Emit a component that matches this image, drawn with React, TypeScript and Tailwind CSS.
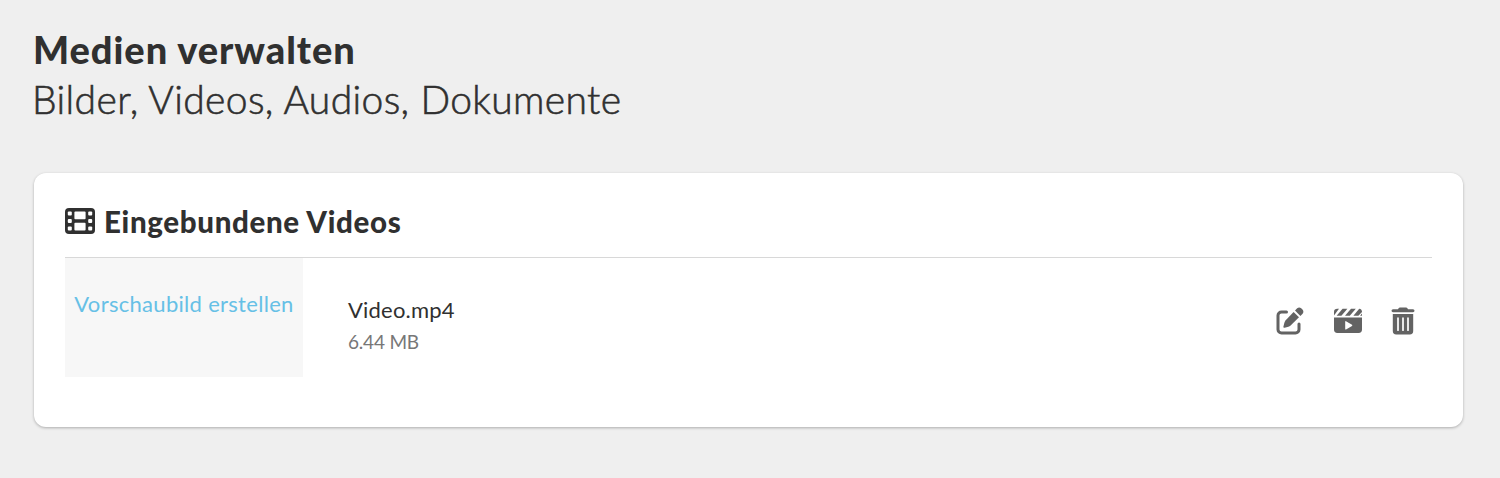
import type { ReactNode } from "react";

interface IconButtonProps {
  label: string;
  children: ReactNode;
}

function FilmIcon() {
  return (
    <svg width="31" height="28" viewBox="1 0 31 28" fill="none" aria-hidden="true">
      <rect x="1" y="1" width="30" height="26" rx="4" fill="#303030" />
      <g fill="#fff">
        <rect x="3.8" y="4.4" width="4" height="4" rx="1" />
        <rect x="3.8" y="12" width="4" height="4" rx="1" />
        <rect x="3.8" y="19.6" width="4" height="4" rx="1" />
        <rect x="10.4" y="4.4" width="11.2" height="7.8" rx="1" />
        <rect x="10.4" y="15.8" width="11.2" height="7.8" rx="1" />
        <rect x="24.2" y="4.4" width="4" height="4" rx="1" />
        <rect x="24.2" y="12" width="4" height="4" rx="1" />
        <rect x="24.2" y="19.6" width="4" height="4" rx="1" />
      </g>
    </svg>
  );
}

function EditIcon() {
  return (
    <svg width="28" height="28" viewBox="0 0 28 28" fill="none" aria-hidden="true">
      <path
        d="M10.5 5H5.5A3.500 3.500 0 0 0 2 8.500V22.500A3.500 3.500 0 0 0 5.500 26H19.500A3.500 3.500 0 0 0 23 22.500V17"
        stroke="#636363"
        strokeWidth="3"
        strokeLinecap="round"
      />
      <path
        d="M17.600 4.900L23 10.300L14.600 18.400Q13.600 19.300 12.400 19.700L8.600 20.700Q7.100 21 7.400 19.500L8.400 15.700Q8.800 14.300 9.700 13.200Z"
        fill="#636363"
      />
      <path
        d="M19 3.500L21.200 1.300Q23.200-.2 25.200 1.300L26.700 2.800Q28.100 4.700 26.600 6.700L24.400 8.900Z"
        fill="#636363"
      />
    </svg>
  );
}

function ClapperIcon() {
  return (
    <svg width="28" height="28" viewBox="0 0 28 28" aria-hidden="true">
      <g fill="#636363">
        <path d="M0 8.500V5Q0 1.800 3.400 1.800H5Z" />
        <path d="M8.600 1.800H13.400L7.400 8.800H2.600Z" />
        <path d="M17 1.800H21.800L15.800 8.800H11Z" />
        <path d="M25.200 1.800Q28 2.200 28 5L24.400 8.800H19.400Z" />
        <path d="M28 6.500V8.800H26.100Z" />
        <path
          d="M0 10.600H28V22.600Q28 26 24.600 26H3.400Q0 26 0 22.600ZM11.200 14.600V22Q11.300 22.800 12 22.400L18 18.900Q18.700 18.300 18 17.700L12 14.200Q11.300 13.900 11.200 14.600Z"
          fillRule="evenodd"
        />
      </g>
    </svg>
  );
}

function TrashIcon() {
  return (
    <svg width="24" height="28" viewBox="0 0 24 28" aria-hidden="true">
      <path
        d="M7 2.200L7.600 1.200Q8 .4 9 .4H15Q16 .4 16.400 1.200L17 2.200H22Q23.500 2.300 23.500 3.800Q23.500 5.200 22 5.300H2Q.5 5.200.5 3.800Q.5 2.300 2 2.200Z"
        fill="#636363"
      />
      <path d="M1.800 7.100H22.200V24Q22.200 27.400 18.800 27.400H5.200Q1.800 27.400 1.800 24Z" fill="#636363" />
      <path
        d="M7 11.200V23.200M12 11.200V23.200M17 11.200V23.200"
        stroke="#fff"
        strokeWidth="1.700"
        strokeLinecap="round"
      />
    </svg>
  );
}

function IconButton({ label, children }: IconButtonProps) {
  return (
    <button type="button" title={label} aria-label={label} className="block">
      {children}
    </button>
  );
}

export default function App() {
  return (
    <main className="min-h-[478px] bg-[#efefef] px-[34px] pt-6 font-['Lato',sans-serif] text-[#303030]">
      <h1 className="-ml-px text-[38px] leading-[50px] font-black tracking-[0.95px] whitespace-nowrap">
        Medien verwalten
      </h1>
      <h2 className="-ml-[2px] text-[39px] leading-[51px] font-light tracking-[0.37px] whitespace-nowrap [-webkit-text-stroke:0.6px]">
        Bilder, Videos, Audios, Dokumente
      </h2>

      {/* Videos */}
      <section className="mt-12 h-[254px] w-[1429px] rounded-xl bg-white px-[31px] pt-7 shadow-[0_1px_3px_rgba(0,0,0,0.28)]">
        <div className="flex items-center gap-2 border-b border-[#d8d8d8] pb-4">
          <FilmIcon />
          <h3 className="pt-px text-[29.5px] leading-[39px] font-black tracking-[0.65px] whitespace-nowrap">
            Eingebundene Videos
          </h3>
        </div>
        <div className="flex items-start">
          <div className="h-[119px] w-[238px] bg-[#f7f7f7] pt-[31px] text-center">
            <a
              href="#"
              className="text-[22px] leading-[30px] tracking-[0.3px] whitespace-nowrap text-[#66c0e6]"
            >
              Vorschaubild erstellen
            </a>
          </div>
          <div className="ml-[45px] pt-9">
            <div className="text-[22px] leading-8 tracking-[0.2px]">Video.mp4</div>
            <div className="text-[19px] leading-8 tracking-[-0.2px] text-[#777]">6.44 MB</div>
          </div>
          <div className="mt-[49px] mr-[17px] ml-auto flex items-center gap-[29.5px]">
            <IconButton label="Bearbeiten">
              <EditIcon />
            </IconButton>
            <IconButton label="Vorschaubild">
              <ClapperIcon />
            </IconButton>
            <IconButton label="Löschen">
              <TrashIcon />
            </IconButton>
          </div>
        </div>
      </section>
    </main>
  );
}
